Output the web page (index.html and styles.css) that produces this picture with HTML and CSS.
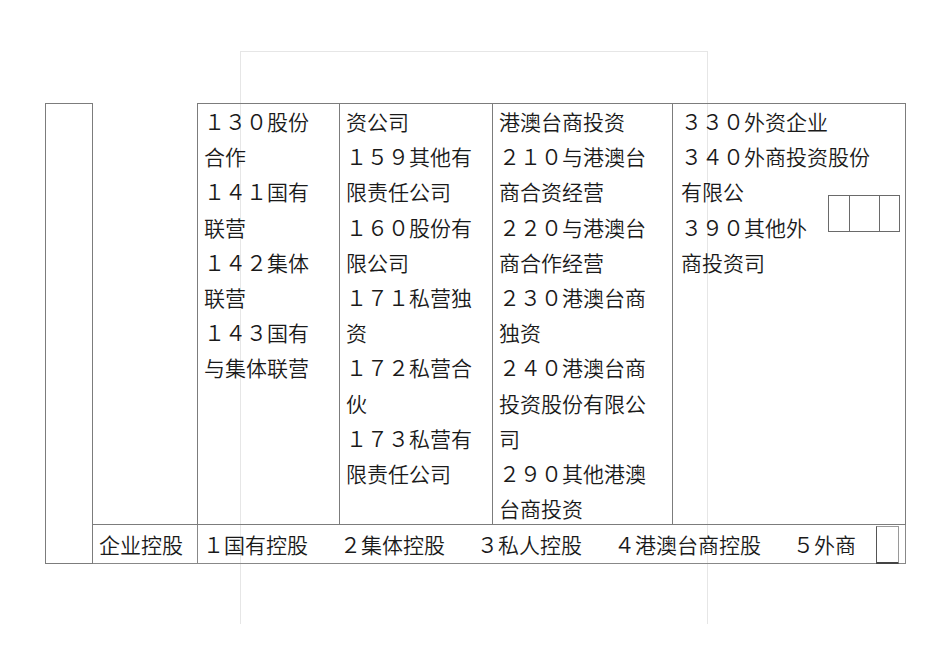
FILE: index.html
```html
<!DOCTYPE html>
<html lang="zh">
<head>
<meta charset="utf-8">
<title>企业类型</title>
<link rel="stylesheet" href="styles.css">
</head>
<body>
<div class="page-frame"></div>
<table class="form">
  <colgroup>
    <col class="c1"><col class="c2"><col class="c3"><col class="c4"><col class="c5"><col class="c6">
  </colgroup>
  <tr class="r1">
    <td class="side" rowspan="2"></td>
    <td class="blank"></td>
    <td class="txt"><div class="lines">
      <div>１３０股份</div><div>合作</div><div>１４１国有</div><div>联营</div><div>１４２集体</div><div>联营</div><div>１４３国有</div><div>与集体联营</div>
    </div></td>
    <td class="txt"><div class="lines">
      <div>资公司</div><div>１５９其他有</div><div>限责任公司</div><div>１６０股份有</div><div>限公司</div><div>１７１私营独</div><div>资</div><div>１７２私营合</div><div>伙</div><div>１７３私营有</div><div>限责任公司</div>
    </div></td>
    <td class="txt"><div class="lines">
      <div>港澳台商投资</div><div>２１０与港澳台</div><div>商合资经营</div><div>２２０与港澳台</div><div>商合作经营</div><div>２３０港澳台商</div><div>独资</div><div>２４０港澳台商</div><div>投资股份有限公</div><div>司</div><div>２９０其他港澳</div><div>台商投资</div>
    </div></td>
    <td class="txt last"><div class="lines">
      <div>３３０外资企业</div><div>３４０外商投资股份</div><div>有限公</div><div>３９０其他外</div><div>商投资司</div>
    </div>
    <div class="codebox"><span class="cb a"></span><span class="cb b"></span><span class="cb c"></span></div>
    </td>
  </tr>
  <tr class="r2">
    <td class="label">企业控股</td>
    <td class="opts" colspan="4">
      <div class="optrow">
        <span>１国有控股</span><span>２集体控股</span><span>３私人控股</span><span>４港澳台商控股</span><span>５外商</span>
      </div>
      <div class="tick"></div>
    </td>
  </tr>
</table>
</body>
</html>
```
FILE: styles.css
```css
html, body {
  margin: 0;
  padding: 0;
  background: #ffffff;
}
body {
  position: relative;
  width: 950px;
  height: 672px;
  font-family: "Noto Sans CJK SC", "Noto Sans", sans-serif;
  font-weight: 350;
  color: #1a1a1a;
  overflow: hidden;
}
.page-frame {
  position: absolute;
  left: 240px;
  top: 51px;
  width: 466px;
  height: 572px;
  border: 1px solid #e6e6e6;
  border-bottom: none;
  z-index: 0;
}
.form {
  position: relative;
  z-index: 1;
  margin: 103px 0 0 45px;
  border-collapse: collapse;
  table-layout: fixed;
  width: 861px;
  font-size: 21px;
}
.c1 { width: 47px; }
.c2 { width: 105px; }
.c3 { width: 142px; }
.c4 { width: 153px; }
.c5 { width: 180px; }
.c6 { width: 233px; }
.form td {
  border: 1px solid #7c7c7c;
  padding: 0;
  vertical-align: top;
}
.form td.blank {
  border-top: none;
}
.r1 { height: 421px; }
.r2 { height: 39px; }
.txt {
  padding: 0 0 0 6px !important;
}
.last {
  position: relative;
  padding-left: 8px !important;
}
.lines {
  height: 420px;
  line-height: 35.2px;
  white-space: nowrap;
  overflow: visible;
}
.codebox {
  position: absolute;
  left: 155px;
  top: 91px;
  display: flex;
  height: 37px;
  border: 1px solid #6a6a6a;
  box-sizing: border-box;
}
.cb {
  display: block;
  height: 100%;
}
.cb.a { width: 20px; border-right: 1px solid #6a6a6a; }
.cb.b { width: 29px; border-right: 1px solid #6a6a6a; }
.cb.c { width: 19px; }
.form td.label {
  vertical-align: middle;
  padding-left: 6px;
  line-height: 38px;
  white-space: nowrap;
  border-color: #888888;
}
.form td.opts {
  position: relative;
  vertical-align: middle;
  padding-left: 5px;
  border-color: #888888;
}
.optrow {
  display: flex;
  gap: 32px;
  line-height: 38px;
  white-space: nowrap;
}
.tick {
  position: absolute;
  right: 6px;
  top: 1px;
  width: 21px;
  height: 35px;
  border: 1px solid #9a9a9a;
  border-left-color: #555555;
  border-bottom: 2px solid #444444;
}
```
